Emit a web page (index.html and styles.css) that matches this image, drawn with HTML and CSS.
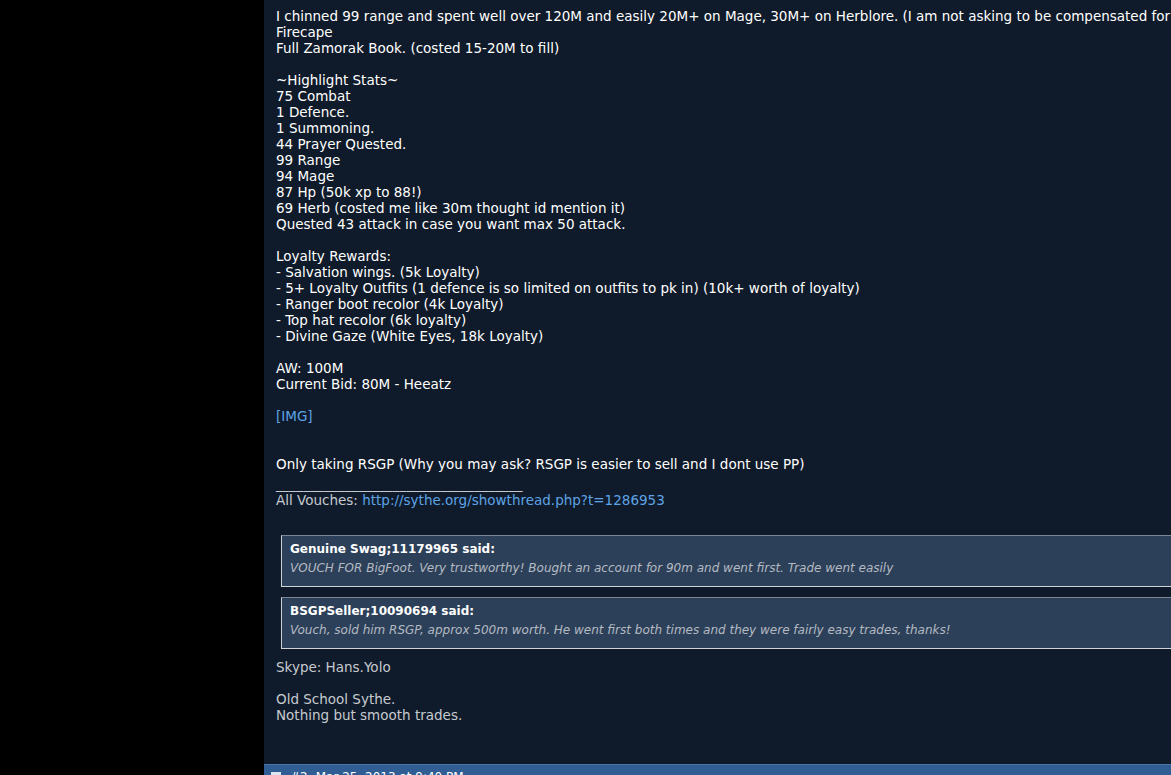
FILE: index.html
```html
<!DOCTYPE html>
<html lang="en">
<head>
	<meta charset="UTF-8">
	<title>Post</title>
	<link rel="stylesheet" href="styles.css">
</head>
<body>
	<div class="page">
		<div class="side"></div>
		<div class="main">
			<div class="post">
				<div class="message">
					I chinned 99 range and spent well over 120M and easily 20M+ on Mage, 30M+ on Herblore. (I am not asking to be compensated for<br>
					Firecape<br>
					Full Zamorak Book. (costed 15-20M to fill)<br>
					<br>
					~Highlight Stats~<br>
					75 Combat<br>
					1 Defence.<br>
					1 Summoning.<br>
					44 Prayer Quested.<br>
					99 Range<br>
					94 Mage<br>
					87 Hp (50k xp to 88!)<br>
					69 Herb (costed me like 30m thought id mention it)<br>
					Quested 43 attack in case you want max 50 attack.<br>
					<br>
					Loyalty Rewards:<br>
					- Salvation wings. (5k Loyalty)<br>
					- 5+ Loyalty Outfits (1 defence is so limited on outfits to pk in) (10k+ worth of loyalty)<br>
					- Ranger boot recolor (4k Loyalty)<br>
					- Top hat recolor (6k loyalty)<br>
					- Divine Gaze (White Eyes, 18k Loyalty)<br>
					<br>
					AW: 100M<br>
					Current Bid: 80M - Heeatz<br>
					<br>
					<a href="#">[IMG]</a><br>
					<br>
					<br>
					Only taking RSGP (Why you may ask? RSGP is easier to sell and I dont use PP)
				</div>
				<div class="signature">
					<div class="sig-rule">____________________________________</div>
					All Vouches: <a href="#">http://sythe.org/showthread.php?t=1286953</a>
					<div class="quote">
						<div class="quote-name">Genuine Swag;11179965 said:</div>
						<div class="quote-text">VOUCH FOR BigFoot. Very trustworthy! Bought an account for 90m and went first. Trade went easily</div>
					</div>
					<div class="quote">
						<div class="quote-name">BSGPSeller;10090694 said:</div>
						<div class="quote-text">Vouch, sold him RSGP, approx 500m worth. He went first both times and they were fairly easy trades, thanks!</div>
					</div>
					Skype: Hans.Yolo<br>
					<br>
					Old School Sythe.<br>
					Nothing but smooth trades.
				</div>
			</div>
			<div class="post-head">
				<svg class="post-icon" width="12" height="12" viewBox="0 0 12 12"><rect x="1" y="1" width="10" height="10" fill="#dfe6ef"/><path d="M3 4.5h6M3 7.5h6" stroke="#2f5d94" stroke-width="1"/></svg>
				<span>#2</span>
				<span>Mar 25, 2013 at 9:40 PM</span>
			</div>
		</div>
	</div>
</body>
</html>
```

FILE: styles.css
```css
* {
	margin: 0;
	padding: 0;
}
body {
	background-color: #000;
	overflow: hidden;
	font-family: "DejaVu Sans", Verdana, sans-serif;
	font-size: 13.5px;
	line-height: 16px;
	color: #fff;
}
a {
	color: #5ea3e6;
	text-decoration: none;
}
.page {
	display: flex;
	width: 1400px;
	height: 775px;
	overflow: hidden;
}
.side {
	width: 264px;
	flex-shrink: 0;
	background-color: #000;
}
.main {
	flex: 1;
	background-color: #0f1b2a;
	display: flex;
	flex-direction: column;
}
.post {
	height: 756px;
	flex-shrink: 0;
	padding: 8px 0 0 12px;
}
.message {
	white-space: nowrap;
}
.signature {
	margin-top: 4px;
	color: #c6cad0;
	white-space: nowrap;
}
.sig-rule {
	letter-spacing: 0.1px;
}
.quote {
	margin: 27px 0 10px 5px;
	width: 1000px;
	background-color: #2c4059;
	border: 1px solid #d0d4d8;
	border-top-color: #7c8590;
	padding: 5px 8px 10px;
}
.quote + .quote {
	margin-top: 0;
	margin-bottom: 10px;
}
.quote-name {
	font-size: 12px;
	font-weight: bold;
	color: #fff;
	margin-bottom: 3px;
}
.quote-text {
	font-size: 12px;
	font-style: italic;
	color: #b4bac2;
}
.post-head {
	height: 30px;
	flex-shrink: 0;
	background-color: #2f5d94;
	border-top: 1px solid #4876ab;
	display: flex;
	align-items: flex-start;
	gap: 8px;
	padding: 6px 0 0 6px;
	color: #fff;
	font-size: 12px;
	line-height: 12px;
}
```
